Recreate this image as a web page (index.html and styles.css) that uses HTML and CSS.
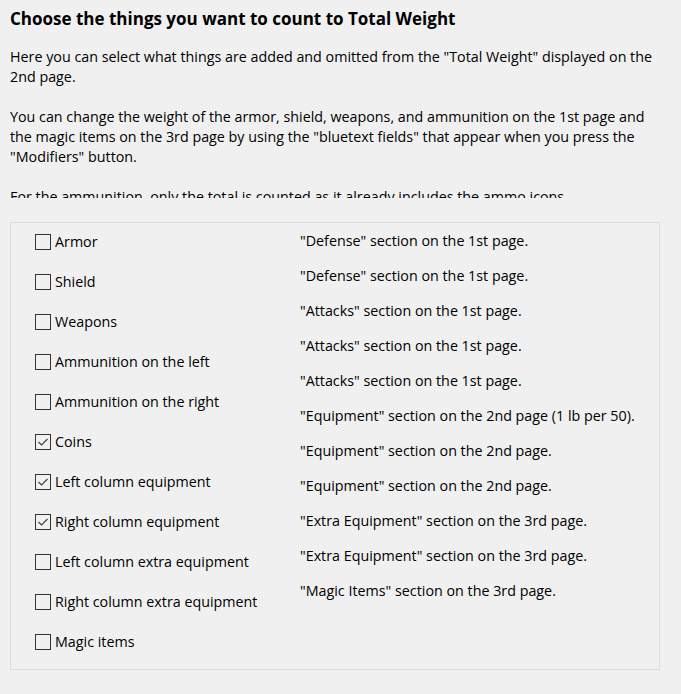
FILE: index.html
```html
<!DOCTYPE html>
<html>
<head>
<meta charset="utf-8">
<link rel="stylesheet" href="styles.css">
</head>
<body>
<div class="intro">
  <h1 class="title">Choose the things you want to count to Total Weight</h1>
  <div class="text">
    <p>Here you can select what things are added and omitted from the "Total Weight" displayed on the 2nd page.</p>
    <p>You can change the weight of the armor, shield, weapons, and ammunition on the 1st page and the magic items on the 3rd page by using the "bluetext fields" that appear when you press the "Modifiers" button.</p>
    <p>For the ammunition, only the total is counted as it already includes the ammo icons.</p>
  </div>
</div>
<div class="box">
  <div class="checks">
    <label class="row"><span class="cb"></span>Armor</label>
    <label class="row"><span class="cb"></span>Shield</label>
    <label class="row"><span class="cb"></span>Weapons</label>
    <label class="row"><span class="cb"></span>Ammunition on the left</label>
    <label class="row"><span class="cb"></span>Ammunition on the right</label>
    <label class="row"><span class="cb on"><svg viewBox="0 0 16 16" width="16" height="16"><path d="M3.5 8 L6.5 11 L12.5 5" fill="none" stroke="#444" stroke-width="1.2"/></svg></span>Coins</label>
    <label class="row"><span class="cb on"><svg viewBox="0 0 16 16" width="16" height="16"><path d="M3.5 8 L6.5 11 L12.5 5" fill="none" stroke="#444" stroke-width="1.2"/></svg></span>Left column equipment</label>
    <label class="row"><span class="cb on"><svg viewBox="0 0 16 16" width="16" height="16"><path d="M3.5 8 L6.5 11 L12.5 5" fill="none" stroke="#444" stroke-width="1.2"/></svg></span>Right column equipment</label>
    <label class="row"><span class="cb"></span>Left column extra equipment</label>
    <label class="row"><span class="cb"></span>Right column extra equipment</label>
    <label class="row"><span class="cb"></span>Magic items</label>
  </div>
  <div class="descs">
    <div class="desc">"Defense" section on the 1st page.</div>
    <div class="desc">"Defense" section on the 1st page.</div>
    <div class="desc">"Attacks" section on the 1st page.</div>
    <div class="desc">"Attacks" section on the 1st page.</div>
    <div class="desc">"Attacks" section on the 1st page.</div>
    <div class="desc">"Equipment" section on the 2nd page (1 lb per 50).</div>
    <div class="desc">"Equipment" section on the 2nd page.</div>
    <div class="desc">"Equipment" section on the 2nd page.</div>
    <div class="desc">"Extra Equipment" section on the 3rd page.</div>
    <div class="desc">"Extra Equipment" section on the 3rd page.</div>
    <div class="desc">"Magic Items" section on the 3rd page.</div>
  </div>
</div>
</body>
</html>
```
FILE: styles.css
```css
html, body {
  margin: 0;
  padding: 0;
  background: #f0f0f0;
  color: #000;
  font-family: "Open Sans", "Noto Sans", sans-serif;
  font-size: 14.3px;
}
.intro {
  padding: 8px 18px 0 10px;
}
.title {
  margin: 0;
  font-size: 17px;
  font-weight: bold;
  line-height: 22px;
}
.text {
  margin-top: 17px;
  height: 151px;
  overflow: hidden;
  line-height: 20px;
}
.text p {
  margin: 0 0 20px 0;
}
.box {
  margin: 24px 21px 0 10px;
  height: 446px;
  border: 1px solid #dcdcdc;
  display: flex;
}
.checks {
  width: 265px;
  padding: 9px 0 0 24px;
  display: flex;
  flex-direction: column;
  gap: 20px;
}
.row {
  display: flex;
  align-items: center;
  height: 20px;
  line-height: 20px;
  white-space: nowrap;
}
.cb {
  width: 16px;
  height: 16px;
  border: 1px solid #333;
  box-sizing: border-box;
  margin-right: 4px;
  position: relative;
  flex: none;
}
.cb svg {
  position: absolute;
  left: -1px;
  top: -1px;
}
.descs {
  padding: 8px 0 0 0;
  display: flex;
  flex-direction: column;
  gap: 15px;
}
.desc {
  height: 20px;
  line-height: 20px;
  white-space: nowrap;
}
```
